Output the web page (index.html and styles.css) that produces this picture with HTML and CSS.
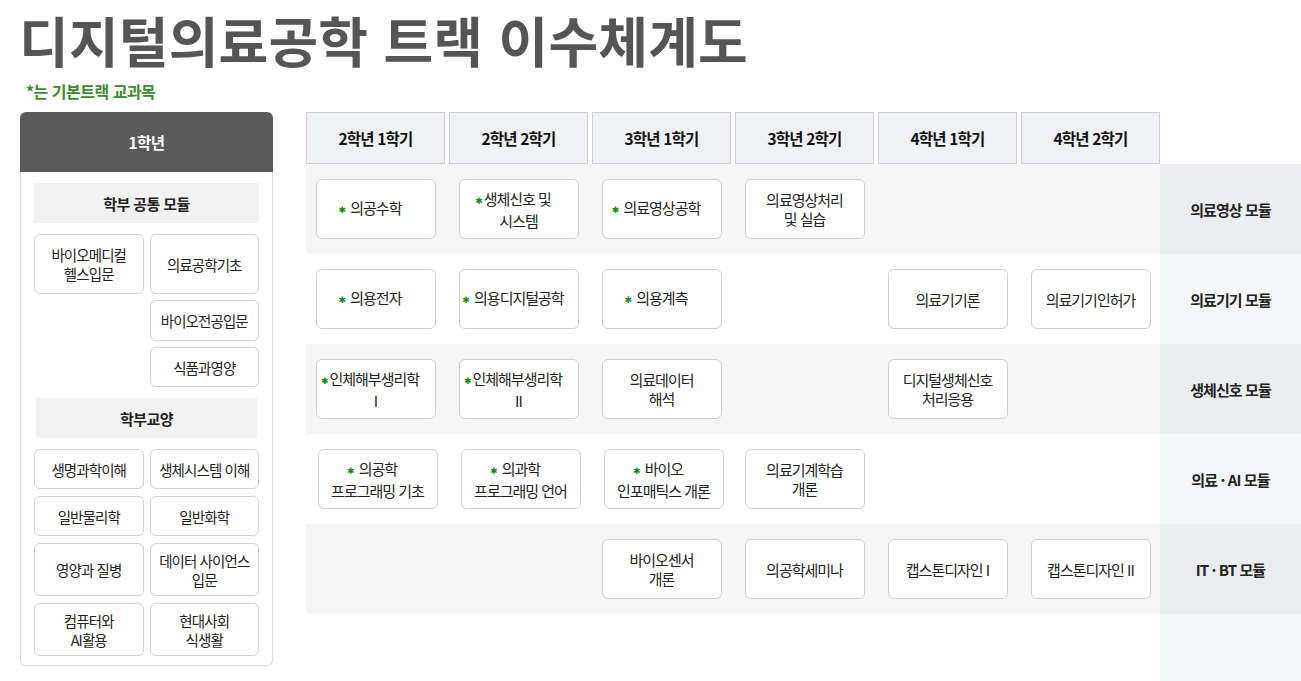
FILE: index.html
```html
<!DOCTYPE html>
<html lang="ko">
<head>
<meta charset="utf-8">
<title>디지털의료공학 트랙 이수체계도</title>
<link rel="stylesheet" href="styles.css">
</head>
<body>
<div class="page">
  <h1 class="title">디지털의료공학 트랙 이수체계도</h1>
  <p class="legend">*는 기본트랙 교과목</p>

  <div class="main">
    <section class="year">
      <div class="year-head">1학년</div>
      <div class="year-body">
        <div class="group-title">학부 공통 모듈</div>
        <div class="pair-grid common">
          <div class="lc">바이오메디컬<br>헬스입문</div>
          <div class="lc">의료공학기초</div>
          <div class="lc col2">바이오전공입문</div>
          <div class="lc col2">식품과영양</div>
        </div>
        <div class="group-title narrow">학부교양</div>
        <div class="pair-grid liberal">
          <div class="lc">생명과학이해</div>
          <div class="lc">생체시스템 이해</div>
          <div class="lc">일반물리학</div>
          <div class="lc">일반화학</div>
          <div class="lc">영양과 질병</div>
          <div class="lc">데이터 사이언스<br>입문</div>
          <div class="lc">컴퓨터와<br>AI활용</div>
          <div class="lc">현대사회<br>식생활</div>
        </div>
      </div>
    </section>

    <section class="track">
      <div class="sem-head">
        <div class="sem">2학년 1학기</div>
        <div class="sem">2학년 2학기</div>
        <div class="sem">3학년 1학기</div>
        <div class="sem">3학년 2학기</div>
        <div class="sem">4학년 1학기</div>
        <div class="sem">4학년 2학기</div>
      </div>

      <div class="module-row alt">
        <div class="module-courses">
          <div class="cc"><span><span class="mark"><span class="star">✱</span> 의공수학</span></span></div>
          <div class="cc"><span><span class="mark"><span class="star">✱</span>생체신호 및</span><br>시스템</span></div>
          <div class="cc"><span><span class="mark"><span class="star">✱</span> 의료영상공학</span></span></div>
          <div class="cc"><span>의료영상처리<br>및 실습</span></div>
          <div class="slot"></div>
          <div class="slot"></div>
        </div>
        <div class="module-name">의료영상 모듈</div>
      </div>

      <div class="module-row">
        <div class="module-courses">
          <div class="cc"><span><span class="mark"><span class="star">✱</span> 의용전자</span></span></div>
          <div class="cc"><span><span class="mark"><span class="star">✱</span> 의용디지털공학</span></span></div>
          <div class="cc"><span><span class="mark"><span class="star">✱</span> 의용계측</span></span></div>
          <div class="slot"></div>
          <div class="cc"><span>의료기기론</span></div>
          <div class="cc"><span>의료기기인허가</span></div>
        </div>
        <div class="module-name">의료기기 모듈</div>
      </div>

      <div class="module-row alt">
        <div class="module-courses">
          <div class="cc"><span><span class="mark"><span class="star">✱</span>인체해부생리학</span><br>I</span></div>
          <div class="cc"><span><span class="mark"><span class="star">✱</span>인체해부생리학</span><br>II</span></div>
          <div class="cc"><span>의료데이터<br>해석</span></div>
          <div class="slot"></div>
          <div class="cc"><span>디지털생체신호<br>처리응용</span></div>
          <div class="slot"></div>
        </div>
        <div class="module-name">생체신호 모듈</div>
      </div>

      <div class="module-row">
        <div class="module-courses">
          <div class="cc shift"><span><span class="mark"><span class="star">✱</span> 의공학</span><br>프로그래밍 기초</span></div>
          <div class="cc shift"><span><span class="mark"><span class="star">✱</span> 의과학</span><br>프로그래밍 언어</span></div>
          <div class="cc shift"><span><span class="mark"><span class="star">✱</span> 바이오</span><br>인포매틱스 개론</span></div>
          <div class="cc"><span>의료기계학습<br>개론</span></div>
          <div class="slot"></div>
          <div class="slot"></div>
        </div>
        <div class="module-name">의료 · AI 모듈</div>
      </div>

      <div class="module-row alt">
        <div class="module-courses">
          <div class="slot"></div>
          <div class="slot"></div>
          <div class="cc"><span>바이오센서<br>개론</span></div>
          <div class="cc"><span>의공학세미나</span></div>
          <div class="cc"><span>캡스톤디자인 I</span></div>
          <div class="cc"><span>캡스톤디자인 II</span></div>
        </div>
        <div class="module-name">IT · BT 모듈</div>
      </div>

      <div class="module-tail"></div>
    </section>
  </div>
</div>
</body>
</html>
```

FILE: styles.css
```css
* {
  box-sizing: border-box;
}

html,
body {
  margin: 0;
  padding: 0;
}

body {
  font-family: "Noto Sans CJK KR", "Noto Sans", sans-serif;
  color: #222;
  background: #fff;
}

.page {
  padding: 13px 0 0 20px;
}

.title {
  margin: 0 0 0 -1px;
  font-size: 54px;
  line-height: 54px;
  font-weight: 700;
  color: #555;
  letter-spacing: 0.2px;
}

.legend {
  margin: 14px 0 0 6px;
  font-size: 16px;
  line-height: 20px;
  font-weight: 700;
  color: #3b8b30;
  letter-spacing: -0.5px;
}

.main {
  display: flex;
  align-items: flex-start;
  gap: 33px;
  margin-top: 11px;
}

/* ---------- 1학년 panel ---------- */
.year {
  width: 253px;
  flex: none;
}

.year-head {
  height: 60px;
  background: #5a5a5a;
  color: #fff;
  border-radius: 6px 6px 0 0;
  display: flex;
  align-items: center;
  justify-content: center;
  font-size: 15.5px;
  font-weight: 700;
  letter-spacing: -0.6px;
}

.year-body {
  border: 1px solid #dcdcdc;
  border-top: 0;
  border-radius: 0 0 6px 6px;
  padding: 11px 13px 9px;
}

.group-title {
  height: 40px;
  background: #f2f2f2;
  display: flex;
  align-items: center;
  justify-content: center;
  font-size: 15px;
  font-weight: 700;
  letter-spacing: -0.6px;
  color: #222;
}

.group-title.narrow {
  margin: 11px 2px 11px;
}

.common {
  margin-top: 11px;
}

.pair-grid {
  display: grid;
  grid-template-columns: 1fr 1fr;
  column-gap: 6px;
}

.pair-grid.common {
  grid-template-rows: 60px 41px 40px;
  row-gap: 6px;
}

.pair-grid.liberal {
  grid-template-rows: 40px 40px 53px 53px;
  row-gap: 7px;
}

.col2 {
  grid-column: 2;
}

.lc {
  background: #fff;
  border: 1px solid #d3d3d3;
  border-radius: 6px;
  display: flex;
  align-items: center;
  justify-content: center;
  text-align: center;
  font-size: 14.5px;
  line-height: 19px;
  letter-spacing: -0.9px;
  color: #222;
}

/* ---------- track grid ---------- */
.track {
  width: 995px;
  flex: none;
}

.sem-head {
  display: grid;
  grid-template-columns: repeat(6, 139px);
  column-gap: 4px;
}

.sem {
  height: 52px;
  background: #f0f1f5;
  border: 1px solid #cfd0d4;
  display: flex;
  align-items: center;
  justify-content: center;
  font-size: 15.5px;
  font-weight: 700;
  letter-spacing: -0.8px;
  color: #111;
}

.module-row {
  display: flex;
  height: 90px;
}

.module-courses {
  width: 854px;
  display: grid;
  grid-template-columns: repeat(6, 139px);
  column-gap: 4px;
  align-items: center;
  justify-items: center;
  background: #fff;
}

.module-row.alt .module-courses {
  background: #f5f5f5;
}

.module-name {
  width: 141px;
  display: flex;
  align-items: center;
  justify-content: center;
  background: #f5f6f8;
  font-size: 15px;
  font-weight: 700;
  letter-spacing: -0.9px;
  color: #222;
}

.module-row.alt .module-name {
  background: #ecedf0;
}

.module-tail {
  margin-left: 854px;
  width: 141px;
  height: 80px;
  background: #f5f6f8;
}

.cc {
  width: 120px;
  height: 60px;
  background: #fff;
  border: 1px solid #d0d0d0;
  border-radius: 6px;
  display: flex;
  align-items: center;
  justify-content: center;
  text-align: center;
  font-size: 15px;
  line-height: 19px;
  letter-spacing: -1px;
  color: #222;
}

.cc.shift {
  margin-left: 4px;
}

.mark {
  padding-right: 11px;
}

.star {
  font-family: "DejaVu Sans", sans-serif;
  font-size: 9px;
  color: #0f8a14;
  vertical-align: 1px;
  letter-spacing: 0;
  margin-right: 1px;
}
```
